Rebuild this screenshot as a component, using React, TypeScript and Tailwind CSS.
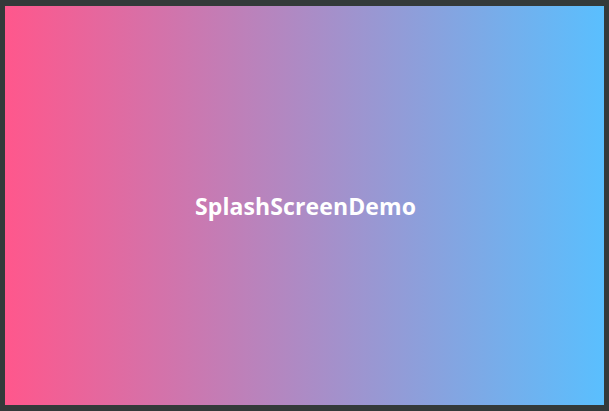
export default function App() {
  return (
    <div className="w-[609px] h-[411px] bg-[#343a3a] pt-[6px] pl-[5px]">
      <div className="w-[599px] h-[399px] bg-linear-to-r/srgb from-[#ff578c] to-[#5abffe] flex items-center justify-center">
        <span className="text-white font-bold text-[23px] tracking-[0.1px] pt-[2px] pl-[2px]" style={{ fontFamily: '"Open Sans", "Noto Sans", sans-serif' }}>
          SplashScreenDemo
        </span>
      </div>
    </div>
  )
}
